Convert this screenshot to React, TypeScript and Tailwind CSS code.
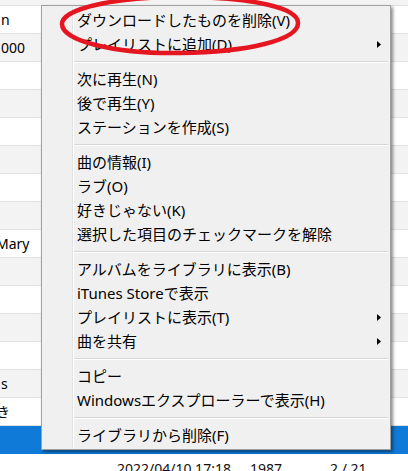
import React from "react";

type Row = { text?: string; shift?: boolean; selected?: boolean };

const rows: Row[] = [
  { text: "n" },
  { text: "000" },
  {},
  {},
  {},
  {},
  {},
  {},
  { text: "Mary", shift: true },
  {},
  {},
  {},
  {},
  { text: "s" },
  { text: "き", shift: true },
  { selected: true },
];

type MenuEntry = { label: string; sub?: boolean } | "sep";

const menu: MenuEntry[] = [
  { label: "ダウンロードしたものを削除(V)" },
  { label: "プレイリストに追加(D)", sub: true },
  "sep",
  { label: "次に再生(N)" },
  { label: "後で再生(Y)" },
  { label: "ステーションを作成(S)" },
  "sep",
  { label: "曲の情報(I)" },
  { label: "ラブ(O)" },
  { label: "好きじゃない(K)" },
  { label: "選択した項目のチェックマークを解除" },
  "sep",
  { label: "アルバムをライブラリに表示(B)" },
  { label: "iTunes Storeで表示" },
  { label: "プレイリストに表示(T)", sub: true },
  { label: "曲を共有", sub: true },
  "sep",
  { label: "コピー" },
  { label: "Windowsエクスプローラーで表示(H)" },
  "sep",
  { label: "ライブラリから削除(F)" },
];

const Arrow = () => (
  <svg width="4" height="7" viewBox="0 0 4 7">
    <path d="M0 0 L4 3.5 L0 7 Z" fill="#000" />
  </svg>
);

const App: React.FC = () => {
  return (
    <div className="relative w-[408px] h-[471px] overflow-hidden bg-white text-black font-['Noto_Sans','Noto_Sans_CJK_JP',sans-serif]">
      {/* track list behind the menu */}
      <div className="flex flex-col text-[14px]">
        <div className="h-[6px] bg-[#f3f3f3] border-b border-[#e2e2e2]" />
        {rows.map((r, i) => (
          <div
            key={i}
            className={
              r.selected
                ? "h-[28px] bg-[#0f7ad8]"
                : i % 2 === 0
                ? "h-[28px] bg-white border-b border-[#e2e2e2] flex items-center overflow-hidden"
                : "h-[28px] bg-[#f3f3f3] border-b border-[#e2e2e2] flex items-center overflow-hidden"
            }
          >
            {r.text && (
              <span className={r.shift ? "-ml-[4px] whitespace-nowrap" : "ml-[1px] whitespace-nowrap"}>
                {r.text}
              </span>
            )}
          </div>
        ))}
        <div className="h-[28px] flex items-center text-[#111]">
          <span className="ml-[117px] w-[133px] whitespace-nowrap">2022/04/10 17:18</span>
          <span className="w-[80px]">1987</span>
          <span className="whitespace-nowrap">2 / 21</span>
        </div>
      </div>

      {/* context menu */}
      <div className="absolute left-[41px] top-[5px] w-[350px] flex border border-[#a0a0a0] bg-[#f0f0f0] shadow-[2px_2px_3px_rgba(0,0,0,0.45)]">
        <div className="w-[31px] shrink-0 border-r border-[#e2e3e3]" />
        <div className="flex-1 flex flex-col py-[2px] border-l border-white">
          {menu.map((m, i) =>
            m === "sep" ? (
              <div key={i} className="h-[11px] flex items-center pr-[2px]">
                <div className="h-[2px] w-full border-t border-[#d7d7d7] bg-white" />
              </div>
            ) : (
              <div
                key={i}
                className="h-[24px] flex items-center justify-between pl-[3px] pr-[9px] text-[15px] leading-none whitespace-nowrap"
              >
                <span>{m.label}</span>
                {m.sub && <Arrow />}
              </div>
            )
          )}
        </div>
      </div>

      {/* red marker ellipse drawn over the first item */}
      <svg
        className="absolute left-0 top-0 pointer-events-none"
        width="408"
        height="471"
        viewBox="0 0 408 471"
      >
        <path
          d="M180 -3 C118 -3 62 8 62 24 C62 41 115 54 180 53 C248 52 298 40 298 23 C298 8 255 -2 188 -3"
          fill="none"
          stroke="#e5161f"
          strokeWidth="4.5"
          strokeLinecap="round"
        />
      </svg>
    </div>
  );
};

export default App;
